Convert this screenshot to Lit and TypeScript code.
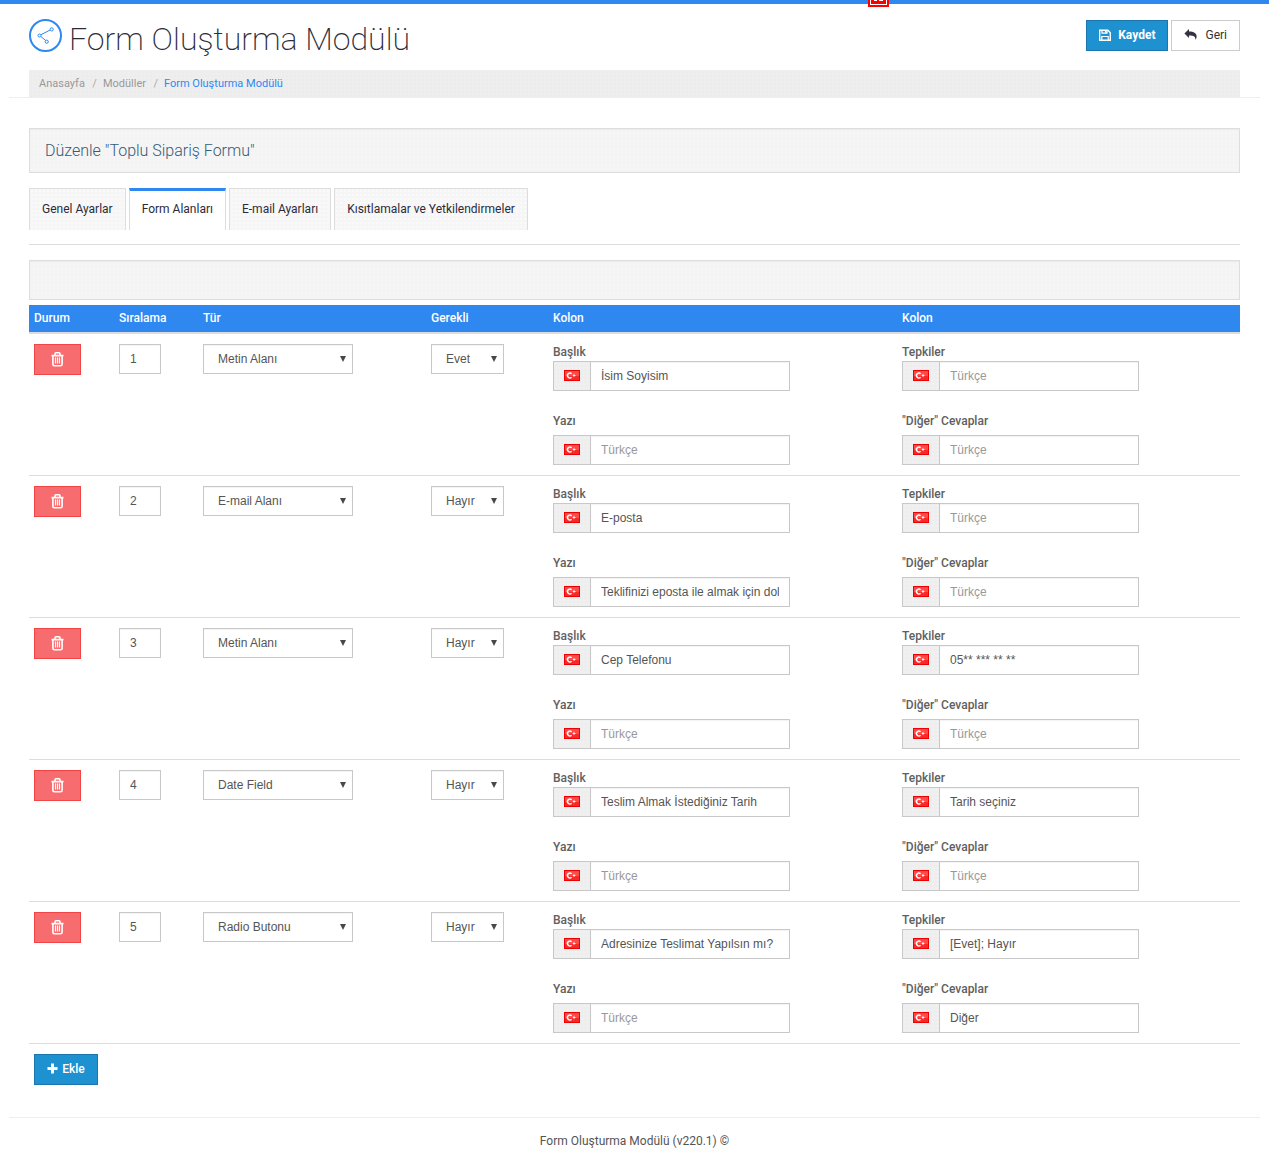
import { LitElement, html, css, svg } from "lit";
import { customElement, property } from "lit/decorators.js";

interface Field {
  order: number;
  type: string;
  required: string;
  title: string;
  text: string;
  replies: string;
  other: string;
}

const TYPES = ["Metin Alanı", "E-mail Alanı", "Date Field", "Radio Butonu"];
const REQUIRED = ["Evet", "Hayır"];
const TABS = ["Genel Ayarlar", "Form Alanları", "E-mail Ayarları", "Kısıtlamalar ve Yetkilendirmeler"];

const FIELDS: Field[] = [
  { order: 1, type: "Metin Alanı", required: "Evet", title: "İsim Soyisim", text: "", replies: "", other: "" },
  { order: 2, type: "E-mail Alanı", required: "Hayır", title: "E-posta", text: "Teklifinizi eposta ile almak için doldurunuz", replies: "", other: "" },
  { order: 3, type: "Metin Alanı", required: "Hayır", title: "Cep Telefonu", text: "", replies: "05** *** ** **", other: "" },
  { order: 4, type: "Date Field", required: "Hayır", title: "Teslim Almak İstediğiniz Tarih", text: "", replies: "Tarih seçiniz", other: "" },
  { order: 5, type: "Radio Butonu", required: "Hayır", title: "Adresinize Teslimat Yapılsın mı?", text: "", replies: "[Evet]; Hayır", other: "Diğer" },
];

@customElement("drop-down")
class DropDown extends LitElement {
  @property({ attribute: false }) options: string[] = [];
  @property() value = "";
  @property() label = "";

  static styles = css`
    :host { display: grid; }
    .select, .arrow { grid-area: 1 / 1; }
    .select {
      appearance: none;
      width: 100%;
      height: 30px;
      margin: 0;
      padding: 0 24px 0 14px;
      border: 1px solid #c8c8c8;
      border-radius: 0;
      background: #fff;
      box-shadow: inset 0 1px 1px #f3f3f3;
      color: #555;
      font: 12px "Liberation Sans", Arial, sans-serif;
    }
    .arrow {
      justify-self: end;
      align-self: center;
      margin-right: 7px;
      pointer-events: none;
    }
  `;

  render() {
    return html`
      <select class="select" aria-label=${this.label}>
        ${this.options.map((o) => html`<option ?selected=${o === this.value}>${o}</option>`)}
      </select>
      <svg class="arrow" width="6" height="6" viewBox="0 0 6 6"><path d="M0 0h6L3 6z" fill="#484848" /></svg>
    `;
  }
}

@customElement("flag-input")
class FlagInput extends LitElement {
  @property() label = "";
  @property() value = "";

  static styles = css`
    :host { display: block; }
    .label {
      display: block;
      line-height: 17px;
      color: #606060;
      font-weight: 500;
    }
    .group {
      display: flex;
      width: 237px;
      max-width: 100%;
      height: 30px;
    }
    .addon {
      box-sizing: border-box;
      display: grid;
      place-items: center;
      width: 37px;
      padding-bottom: 1px;
      border: 1px solid #c8c8c8;
      border-right: 0;
      background-color: #eee;
      background-image: radial-gradient(#f1f1f1 1px, transparent 1px);
      background-size: 4px 4px;
    }
    .input {
      box-sizing: border-box;
      flex: 1;
      min-width: 0;
      margin: 0;
      padding: 0 10px;
      border: 1px solid #c8c8c8;
      border-radius: 0;
      box-shadow: inset 0 1px 1px #f3f3f3;
      color: #555;
      font: 12px "Liberation Sans", Arial, sans-serif;
    }
    .input::placeholder { color: #999; opacity: 1; }
    :host(.spaced) .group { margin-top: 5px; }
  `;

  render() {
    return html`
      <label class="label" for="field">${this.label}</label>
      <div class="group">
        <span class="addon">
          <svg width="16" height="11" viewBox="0 0 16 11">
            <path d="M0 0h16v11H0z" fill="#f00000" />
            <path d="M1 1h14v5H1z" fill="#ff4a4a" />
            <path d="M1 6h14v4H1z" fill="#f72828" />
            <path d="M7.6 3.8A2.4 2.4 0 1 0 7.6 7.2" fill="none" stroke="#fff" stroke-width="1.5" />
            <path d="M10 3.6l.6 1.3 1.6.6-1.6.6-.6 1.3-.6-1.3-1-.6 1-.6z" fill="#fff" />
          </svg>
        </span>
        <input class="input" id="field" type="text" placeholder="Türkçe" .value=${this.value} />
      </div>
    `;
  }
}

const trashIcon = svg`
  <g fill="none" stroke="#fff" stroke-width="1.6">
    <path d="M.5 3.6h12M4 3.4V1.7q0-.9.9-.9h3.2q.9 0 .9.9v1.7M1.9 3.8v8.4q0 1.5 1.5 1.5h6.2q1.5 0 1.5-1.5V3.8" />
    <path d="M4.5 5.6v6M6.5 5.6v6M8.5 5.6v6" stroke-width="1.2" />
  </g>`;

@customElement("app-root")
class AppRoot extends LitElement {
  static styles = css`
    :host {
      display: block;
      position: relative;
      border-top: 4px solid #2e88f0;
      background: #fff;
      color: #555;
      font: 12px/17px Roboto, sans-serif;
    }
    .badge {
      position: absolute;
      top: -4px;
      left: 868px;
      display: block;
    }
    .header, .content, .footer { margin: 0 9px; }
    .header {
      padding: 15px 20px 0;
      border-bottom: 1px solid #eee;
    }
    .bar {
      display: flex;
      align-items: flex-start;
      height: 51px;
    }
    .logo { flex: none; margin-right: 6px; }
    .title {
      flex: 1;
      margin: 0;
      color: #2b2b3a;
      font-size: 32px;
      font-weight: 200;
      line-height: 40px;
    }
    .actions { display: flex; gap: 3px; padding-top: 1px; }
    .btn {
      box-sizing: border-box;
      display: inline-flex;
      align-items: center;
      justify-content: center;
      height: 31px;
      margin: 0;
      padding: 0 12px 2px;
      border: 1px solid #ccc;
      border-radius: 0;
      background: #fff;
      color: #333;
      font: 12px Roboto, sans-serif;
    }
    .primary { border-color: #1d75b0; background: #1e91d1; color: #fff; font-weight: 700; }
    .save, .back { gap: 7px; }
    .add { gap: 4px; width: 64px; padding: 0 0 2px; font-weight: 500; }
    .danger { width: 47px; padding: 0; border-color: #f34545; background: #f76c6f; }
    .crumbs {
      display: flex;
      height: 27px;
      padding: 0 10px;
      background-color: #eee;
      background-image: radial-gradient(#ececec 1px, transparent 1px);
      background-size: 4px 4px;
      font-size: 11px;
      line-height: 27px;
    }
    .crumbs a { color: #999; text-decoration: none; }
    .crumbs .current { color: #2e88f0; }
    .sep {
      box-sizing: border-box;
      width: 18px;
      padding-right: 6px;
      color: #aaa;
      text-align: right;
    }
    .content { padding: 30px 20px 32px; }
    .panel {
      box-sizing: border-box;
      min-height: 40px;
      margin: 0;
      border: 1px solid #ddd;
      background-color: #f5f5f5;
      background-image: radial-gradient(#f3f3f3 1px, transparent 1px);
      background-size: 4px 4px;
      box-shadow: inset 0 1px 1px #ececec;
    }
    .heading {
      padding: 0 15px;
      color: #365a78;
      font-size: 16px;
      font-weight: 300;
      line-height: 43px;
    }
    .tabs {
      display: flex;
      gap: 3px;
      margin: 15px 0;
      padding-bottom: 14px;
      border-bottom: 1px solid #ddd;
    }
    .tab {
      box-sizing: border-box;
      height: 42px;
      padding: 0 12px;
      border: 1px solid #ddd;
      border-bottom: 0;
      background-color: #f6f6f6;
      background-image: radial-gradient(#fafafa 1px, transparent 1px);
      background-size: 4px 4px;
      color: #2b2b3a;
      line-height: 40px;
      text-decoration: none;
    }
    .active {
      border-top: 3px solid #2e88f0;
      background: #fff;
      line-height: 36px;
    }
    .table {
      width: 100%;
      margin-top: 5px;
      border-collapse: separate;
      border-spacing: 0;
      table-layout: fixed;
    }
    .c-status { width: 85px; }
    .c-order { width: 84px; }
    .c-type { width: 228px; }
    .c-required { width: 122px; }
    .c-main { width: 349px; }
    .th {
      padding: 0 5px;
      border-bottom: 2px solid #ddd;
      background: #2e88f0;
      background-clip: padding-box;
      color: #fff;
      font-weight: 500;
      text-align: left;
      line-height: 27px;
    }
    .td {
      padding: 10px 5px;
      border-bottom: 1px solid #ddd;
      vertical-align: top;
    }
    .td .btn { display: flex; }
    .order {
      box-sizing: border-box;
      display: block;
      width: 42px;
      height: 30px;
      margin: 0;
      padding: 0 10px;
      border: 1px solid #c8c8c8;
      border-radius: 0;
      box-shadow: inset 0 1px 1px #f3f3f3;
      color: #555;
      font: 12px "Liberation Sans", Arial, sans-serif;
    }
    .type { width: 150px; }
    .required { width: 73px; }
    .pair { display: grid; gap: 22px; }
    .below { padding: 10px 5px 0; }
    .footer {
      padding: 15px 0 9px;
      border-top: 1px solid #eee;
      text-align: center;
    }
  `;

  private row(f: Field) {
    return html`
      <tr>
        <td class="td">
          <button class="btn danger" aria-label="Sil">
            <svg width="13" height="15" viewBox="0 0 13 15">${trashIcon}</svg>
          </button>
        </td>
        <td class="td"><input class="order" type="text" aria-label="Sıralama" .value=${String(f.order)} /></td>
        <td class="td"><drop-down class="type" label="Tür" .options=${TYPES} .value=${f.type}></drop-down></td>
        <td class="td"><drop-down class="required" label="Gerekli" .options=${REQUIRED} .value=${f.required}></drop-down></td>
        <td class="td">
          <div class="pair">
            <flag-input label="Başlık" .value=${f.title}></flag-input>
            <flag-input class="spaced" label="Yazı" .value=${f.text}></flag-input>
          </div>
        </td>
        <td class="td">
          <div class="pair">
            <flag-input label="Tepkiler" .value=${f.replies}></flag-input>
            <flag-input class="spaced" label='"Diğer" Cevaplar' .value=${f.other}></flag-input>
          </div>
        </td>
      </tr>
    `;
  }

  render() {
    return html`
      <svg class="badge" width="21" height="7" viewBox="0 0 21 7">
        <path d="M0 0h21v7H0z" fill="#f00" />
        <path d="M2 0h1v4h15V0h1v5H2z" fill="#fff" />
        <path d="M6 0h3v1H6zM11 0h4v1h-4z" fill="#fff" />
      </svg>
      <header class="header">
        <div class="bar">
          <svg class="logo" width="34" height="34" viewBox="0 0 34 34" fill="none" stroke="#2e88f0">
            <circle cx="16.5" cy="16.5" r="15.5" stroke-width="2" />
            <path d="M12 15.7l9-4.6M12 17.6l4.6 3.8" />
            <circle cx="10.5" cy="16.5" r="1.5" />
            <circle cx="22.7" cy="10.4" r="1.6" />
            <circle cx="17.7" cy="22.7" r="1.6" />
          </svg>
          <h1 class="title">Form Oluşturma Modülü</h1>
          <div class="actions">
            <button class="btn primary save">
              <svg width="12" height="12" viewBox="0 0 12 12" fill="none" stroke="#fff">
                <path d="M.7 1.2h8.2l2.4 2.5v7.6H.7z" stroke-width="1.4" />
                <path d="M3 1.2v3h5v-3M2.8 11V7.5h6.4V11" stroke-width="1.2" />
                <path d="M6 1.5h1.5v2.2H6z" fill="#fff" stroke="none" />
              </svg>
              Kaydet
            </button>
            <button class="btn back">
              <svg width="14" height="11" viewBox="0 0 14 11">
                <path d="M5 0v2.4c4.8 0 7.6 1.6 7.6 5 0 1.4-.5 2.5-1.2 3.4 .4-2.9-1.3-4.3-6.4-4.3v2.4L.4 4.5z" fill="#333344" />
              </svg>
              Geri
            </button>
          </div>
        </div>
        <nav class="crumbs">
          <a href="#">Anasayfa</a><span class="sep">/</span>
          <a href="#">Modüller</a><span class="sep">/</span>
          <a class="current" href="#">Form Oluşturma Modülü</a>
        </nav>
      </header>
      <main class="content">
        <h2 class="panel heading">Düzenle "Toplu Sipariş Formu"</h2>
        <nav class="tabs">
          ${TABS.map((t, i) => html`<a class=${i === 1 ? "tab active" : "tab"} href="#">${t}</a>`)}
        </nav>
        <div class="panel"></div>
        <table class="table">
          <colgroup>
            <col class="c-status" /><col class="c-order" /><col class="c-type" />
            <col class="c-required" /><col class="c-main" /><col />
          </colgroup>
          <thead>
            <tr>
              ${["Durum", "Sıralama", "Tür", "Gerekli", "Kolon", "Kolon"].map((h) => html`<th class="th">${h}</th>`)}
            </tr>
          </thead>
          <tbody>${FIELDS.map((f) => this.row(f))}</tbody>
        </table>
        <div class="below">
          <button class="btn primary add">
            <svg width="11" height="11" viewBox="0 0 11 11"><path d="M4 .5h3V4h3.5v3H7v3.5H4V7H.5V4H4z" fill="#fff" /></svg>
            Ekle
          </button>
        </div>
      </main>
      <footer class="footer">Form Oluşturma Modülü (v220.1) ©</footer>
    `;
  }
}
